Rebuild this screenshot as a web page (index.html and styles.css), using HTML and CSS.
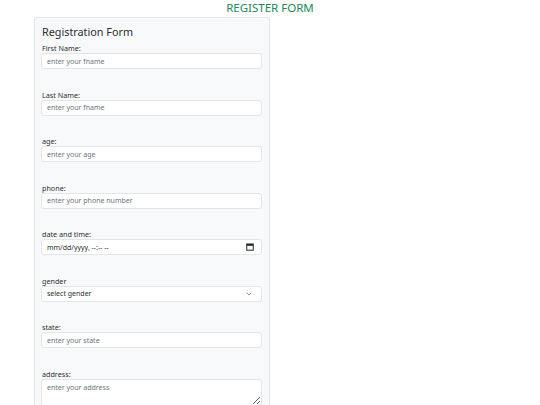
FILE: index.html
```html
<!DOCTYPE html>
<html lang="en">
<head>
<meta charset="utf-8">
<title>Register Form</title>
<link rel="stylesheet" href="styles.css">
</head>
<body>
<h1 class="page-title">REGISTER FORM</h1>
<form class="card">
  <h2 class="card-title">Registration Form</h2>
  <div class="group">
    <label class="label">First Name:</label>
    <input class="control" type="text" placeholder="enter your fname">
  </div>
  <div class="group">
    <label class="label">Last Name:</label>
    <input class="control" type="text" placeholder="enter your fname">
  </div>
  <div class="group">
    <label class="label">age:</label>
    <input class="control" type="text" placeholder="enter your age">
  </div>
  <div class="group">
    <label class="label">phone:</label>
    <input class="control" type="text" placeholder="enter your phone number">
  </div>
  <div class="group">
    <label class="label">date and time:</label>
    <div class="control date-control">
      <span class="date-text">mm/dd/yyyy, --:-- --</span>
      <svg class="cal-icon" width="8" height="8" viewBox="0 0 8 8"><rect x="0.75" y="1" width="6.5" height="6.2" fill="none" stroke="#212529" stroke-width="1"/><rect x="0.75" y="1" width="6.5" height="1.8" fill="#212529"/></svg>
    </div>
  </div>
  <div class="group">
    <label class="label">gender</label>
    <div class="control select-control">
      <span class="select-text">select gender</span>
      <svg class="chev" width="6" height="4" viewBox="0 0 6 4"><path d="M0.8 0.8 L3 3 L5.2 0.8" fill="none" stroke="#6c757d" stroke-width="0.8"/></svg>
    </div>
  </div>
  <div class="group">
    <label class="label">state:</label>
    <input class="control" type="text" placeholder="enter your state">
  </div>
  <div class="group">
    <label class="label">address:</label>
    <textarea class="control area" placeholder="enter your address"></textarea>
  </div>
</form>
</body>
</html>
```

FILE: styles.css
```css
* { box-sizing: border-box; }
html, body { margin: 0; padding: 0; background: #fff; }
body {
  font-family: "Noto Sans", "Open Sans", sans-serif;
  color: #212529;
  height: 405px;
  overflow: hidden;
}
.page-title {
  margin: 0;
  text-align: center;
  font-size: 11.5px;
  line-height: 15px;
  font-weight: 400;
  color: #23875a;
}
.card {
  margin: 2px 0 0 34px;
  width: 236px;
  background: #f8f9fa;
  border: 1px solid #e4e7ea;
  border-radius: 3px;
  padding: 6px 7px 20px 6px;
}
.card-title {
  margin: 0 0 1px;
  padding-left: 1px;
  font-size: 10.8px;
  line-height: 16px;
  font-weight: 400;
  color: #2b2f33;
}
.group {
  display: flex;
  flex-direction: column;
  margin-bottom: 18.5px;
}
.label {
  padding: 2px 0 0 1px;
  font-size: 7.2px;
  line-height: 10px;
  color: #2b2f33;
}
.control {
  display: block;
  width: 100%;
  height: 16px;
  margin: 0;
  padding: 0 5px;
  background: #fff;
  border: 1px solid #e3e6e9;
  border-radius: 3px;
  font-family: inherit;
  font-size: 7px;
  color: #212529;
  outline: none;
}
.control::placeholder { color: #6c757d; opacity: 1; }
.date-control, .select-control {
  display: flex;
  align-items: center;
  justify-content: space-between;
}
.date-text { color: #2b2f33; }
.cal-icon { margin-right: 2px; }
.select-text { color: #2b2f33; }
.chev { margin-right: 4px; }
.area {
  height: 27px;
  padding-top: 3px;
  resize: vertical;
}
```
